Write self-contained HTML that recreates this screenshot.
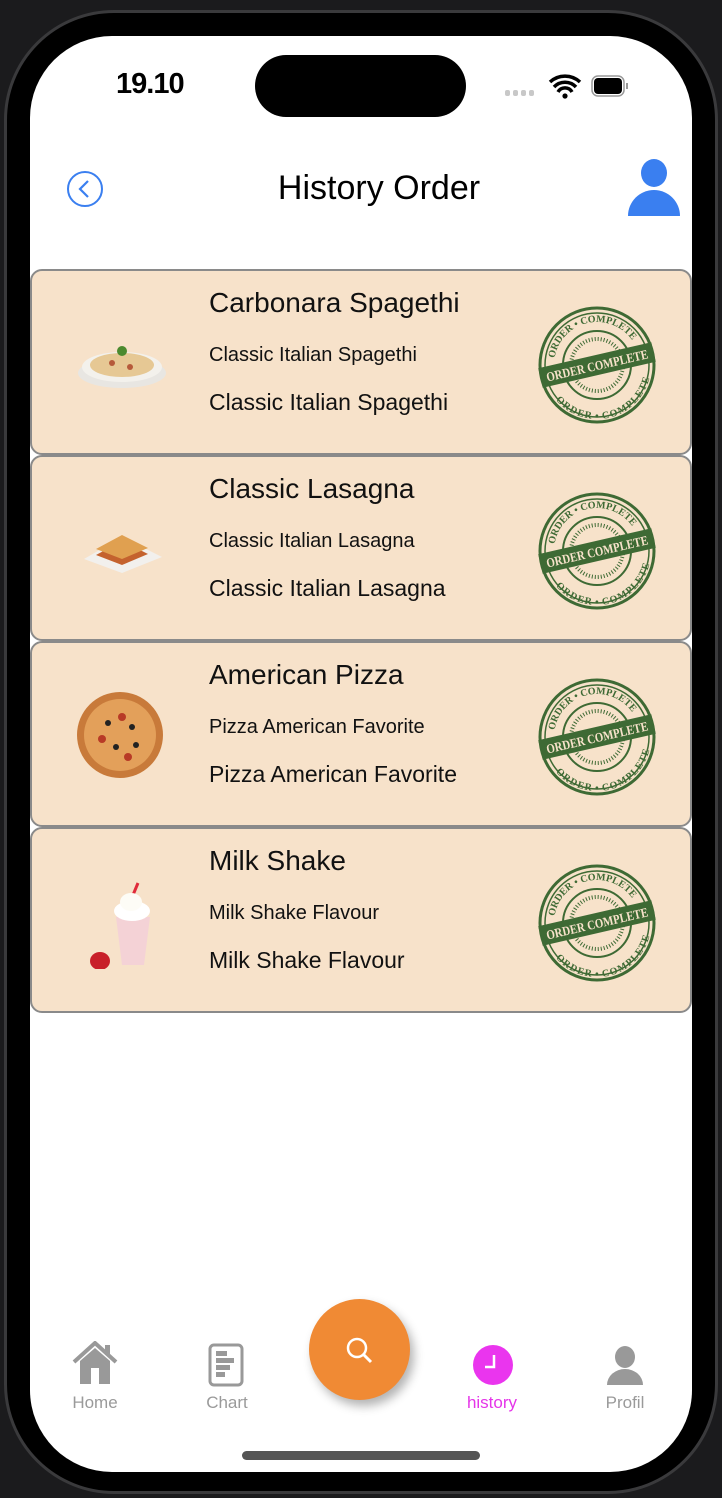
<!DOCTYPE html>
<html><head><meta charset="utf-8">
<style>
*{margin:0;padding:0;box-sizing:border-box}
body{width:722px;height:1498px;background:#1b1b1d;position:relative;overflow:hidden;font-family:"Liberation Sans",sans-serif}
.bezel{position:absolute;left:4px;top:10px;width:714px;height:1484px;border-radius:110px;background:#000;border:3px solid #3a3a3c}
.screen{position:absolute;left:30px;top:36px;width:662px;height:1436px;border-radius:82px;background:#fff;overflow:hidden}
.island{position:absolute;left:255px;top:55px;width:211px;height:62px;border-radius:31px;background:#000}
.time{position:absolute;left:116px;top:68px;font-size:29px;font-weight:bold;color:#000;letter-spacing:-1px}
.title{position:absolute;left:0;width:758px;text-align:center;top:169px;font-size:34px;color:#000}
.card{position:absolute;left:30px;width:662px;height:186px;background:#f7e2ca;border:2px solid #8a8a8a;border-radius:12px}
.card .n{position:absolute;left:177px;top:16px;font-size:28px;color:#111}
.card .d1{position:absolute;left:177px;top:73px;font-size:20px;color:#111}
.card .d2{position:absolute;left:177px;top:118px;font-size:23px;color:#111}
.card svg.st{position:absolute;left:505px;top:34px}
.card svg.f{position:absolute;left:40px;top:40px}
.tab{position:absolute;top:1393px;font-size:17px;color:#9a9a9a;width:100px;text-align:center}
</style></head><body>
<div class="bezel"></div>
<div class="screen"></div>
<div class="island"></div>
<div class="time">19.10</div>
<svg style="position:absolute;left:503px;top:72px" width="140" height="30">
<g fill="#c8c8c8"><rect x="2" y="18" width="5" height="6" rx="2"/><rect x="10" y="18" width="5" height="6" rx="2"/><rect x="18" y="18" width="5" height="6" rx="2"/><rect x="26" y="18" width="5" height="6" rx="2"/></g>
<path d="M47 10a22 22 0 0 1 30 0M51 15a15 15 0 0 1 22 0M55 20a8 8 0 0 1 14 0" stroke="#000" stroke-width="3.5" fill="none"/><circle cx="62" cy="24" r="2.6"/>
<rect x="89" y="4" width="32" height="20" rx="6" fill="none" stroke="#999" stroke-width="1.5"/><rect x="91" y="6" width="28" height="16" rx="4"/><rect x="123" y="11" width="2" height="6" fill="#999"/>
</svg>
<svg style="position:absolute;left:66px;top:170px" width="38" height="38"><circle cx="19" cy="19" r="17" fill="none" stroke="#3a7ff0" stroke-width="2"/><path d="M22 11l-8 8 8 8" fill="none" stroke="#3a7ff0" stroke-width="2.2"/></svg>
<div class="title">History Order</div>
<svg style="position:absolute;left:626px;top:158px" width="56" height="60"><ellipse cx="28" cy="15" rx="13" ry="14" fill="#3a7ff0"/><path d="M2 58a26 26 0 0 1 52 0z" fill="#3a7ff0"/></svg>

<div class="card" style="top:269px"><svg class="f" width="100" height="100"><ellipse cx="50" cy="62" rx="44" ry="15" fill="#e8e6e2"/><ellipse cx="50" cy="56" rx="40" ry="15" fill="#f3f1ec"/><ellipse cx="50" cy="54" rx="32" ry="12" fill="#e6c894"/><circle cx="40" cy="52" r="3" fill="#b65a3a"/><circle cx="58" cy="56" r="3" fill="#b65a3a"/><circle cx="50" cy="40" r="5" fill="#4b8a2e"/></svg><div class="n">Carbonara Spagethi</div><div class="d1">Classic Italian Spagethi</div><div class="d2">Classic Italian Spagethi</div><svg class="st" width="120" height="120"><use href="#stamp"/></svg></div>
<div class="card" style="top:455px"><svg class="f" width="100" height="100"><path d="M12 62l38-22 40 20-40 16z" fill="#f2f0ed"/><path d="M24 58l26-14 26 13-26 11z" fill="#c4622e"/><path d="M24 52l26-14 26 13-26 11z" fill="#e0a050"/></svg><div class="n">Classic Lasagna</div><div class="d1">Classic Italian Lasagna</div><div class="d2">Classic Italian Lasagna</div><svg class="st" width="120" height="120"><use href="#stamp"/></svg></div>
<div class="card" style="top:641px"><svg class="f" width="100" height="100"><circle cx="48" cy="52" r="43" fill="#c87a3a"/><circle cx="48" cy="52" r="36" fill="#e3a05a"/><g fill="#222"><circle cx="36" cy="40" r="3"/><circle cx="60" cy="44" r="3"/><circle cx="44" cy="64" r="3"/><circle cx="64" cy="62" r="3"/></g><g fill="#b83a26"><circle cx="50" cy="34" r="4"/><circle cx="30" cy="56" r="4"/><circle cx="56" cy="74" r="4"/></g></svg><div class="n">American Pizza</div><div class="d1">Pizza American Favorite</div><div class="d2">Pizza American Favorite</div><svg class="st" width="120" height="120"><use href="#stamp"/></svg></div>
<div class="card" style="top:827px"><svg class="f" width="100" height="100"><path d="M66 14l-10 24" stroke="#e02a3a" stroke-width="3"/><path d="M44 48l6 48h22l6-48z" fill="#f4d2d6"/><ellipse cx="60" cy="42" rx="18" ry="10" fill="#fff"/><ellipse cx="59" cy="33" rx="11" ry="9" fill="#fdfcf6"/><ellipse cx="28" cy="92" rx="10" ry="9" fill="#c8202a"/></svg><div class="n">Milk Shake</div><div class="d1">Milk Shake Flavour</div><div class="d2">Milk Shake Flavour</div><svg class="st" width="120" height="120"><use href="#stamp"/></svg></div>

<svg width="0" height="0" style="position:absolute"><defs>
<path id="arcT" d="M17 60a43 43 0 0 1 86 0"/>
<path id="arcB" d="M14 60a46 46 0 0 0 92 0"/>
<g id="stamp" fill="none" stroke="#3e6a34">
<circle cx="60" cy="60" r="57" stroke-width="3"/><circle cx="60" cy="60" r="52" stroke-width="1.5"/><circle cx="60" cy="60" r="34" stroke-width="2"/><circle cx="60" cy="60" r="26" stroke-width="4" stroke-dasharray="1 2"/>
<g transform="rotate(-13 60 60)">
<rect x="2" y="50" width="116" height="20" fill="#3e6a34" stroke="none"/>
<text x="60" y="65" font-size="13" font-family="Liberation Serif" font-weight="bold" fill="#f7e2ca" stroke="none" text-anchor="middle" textLength="104" lengthAdjust="spacingAndGlyphs">ORDER COMPLETE</text>
<text font-size="10" font-family="Liberation Serif" font-weight="bold" fill="#3e6a34" stroke="none"><textPath href="#arcT" startOffset="50%" text-anchor="middle">ORDER • COMPLETE</textPath></text>
<text font-size="10" font-family="Liberation Serif" font-weight="bold" fill="#3e6a34" stroke="none" dy="8"><textPath href="#arcB" startOffset="50%" text-anchor="middle">ORDER • COMPLETE</textPath></text>
</g>
</g></defs></svg>

<svg style="position:absolute;left:70px;top:1341px" width="50" height="45"><path d="M4 21L25 2l21 19" stroke="#999" stroke-width="4" fill="none"/><path d="M10 20L25 7l15 13v23H10z" fill="#999"/><rect x="21" y="27" width="8" height="16" fill="#fff"/><rect x="35" y="4" width="5" height="10" fill="#999"/></svg>
<div class="tab" style="left:45px">Home</div>
<svg style="position:absolute;left:208px;top:1343px" width="38" height="44"><rect x="2" y="2" width="32" height="40" rx="4" fill="none" stroke="#999" stroke-width="3"/><g fill="#999"><rect x="8" y="8" width="11" height="5"/><rect x="8" y="15" width="18" height="5"/><rect x="8" y="22" width="14" height="5"/><rect x="8" y="29" width="9" height="5"/></g></svg>
<div class="tab" style="left:177px">Chart</div>
<div style="position:absolute;left:309px;top:1299px;width:101px;height:101px;border-radius:50%;background:#f08a34;box-shadow:4px 6px 10px rgba(0,0,0,.3)"></div>
<svg style="position:absolute;left:343px;top:1334px" width="34" height="34"><circle cx="14" cy="14" r="9" stroke="#fff" stroke-width="2.5" fill="none"/><path d="M20 20l8 8" stroke="#fff" stroke-width="3"/></svg>
<svg style="position:absolute;left:472px;top:1344px" width="42" height="42"><circle cx="21" cy="21" r="20" fill="#ea35ee"/><path d="M22 11v12h-9" stroke="#fff" stroke-width="2.5" fill="none"/></svg>
<div class="tab" style="left:442px;color:#e535e9">history</div>
<svg style="position:absolute;left:605px;top:1346px" width="40" height="40"><ellipse cx="20" cy="11" rx="10" ry="11" fill="#999"/><path d="M2 39a18 16 0 0 1 36 0z" fill="#999"/></svg>
<div class="tab" style="left:575px">Profil</div>
<div style="position:absolute;left:242px;top:1451px;width:238px;height:9px;border-radius:5px;background:#555"></div>
</body></html>
